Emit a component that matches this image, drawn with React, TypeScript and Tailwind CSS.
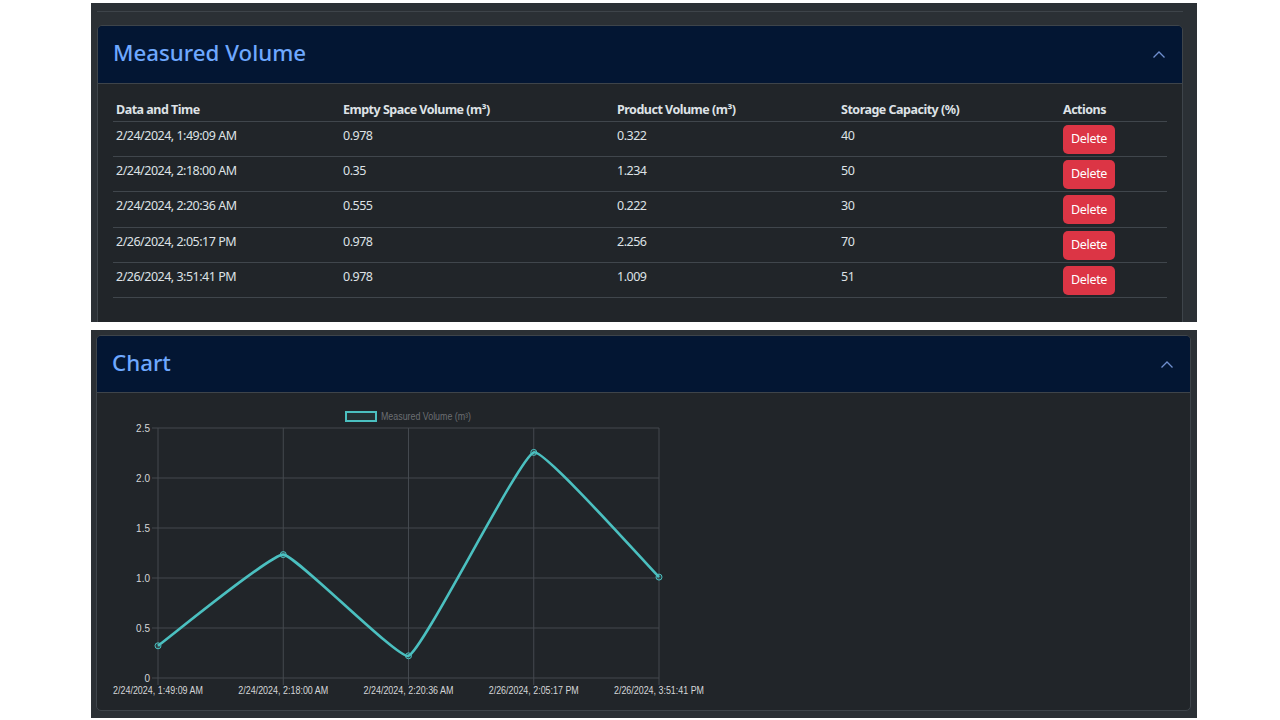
import React from "react";

type Row = {
  date: string;
  empty: string;
  product: string;
  capacity: string;
};

const rows: Row[] = [
  { date: "2/24/2024, 1:49:09 AM", empty: "0.978", product: "0.322", capacity: "40" },
  { date: "2/24/2024, 2:18:00 AM", empty: "0.35", product: "1.234", capacity: "50" },
  { date: "2/24/2024, 2:20:36 AM", empty: "0.555", product: "0.222", capacity: "30" },
  { date: "2/26/2024, 2:05:17 PM", empty: "0.978", product: "2.256", capacity: "70" },
  { date: "2/26/2024, 3:51:41 PM", empty: "0.978", product: "1.009", capacity: "51" },
];

const font = { fontFamily: '"Noto Sans", "Open Sans", Arial, sans-serif' };

const Chevron = () => (
  <svg width="14" height="9" viewBox="0 0 14 9" fill="none">
    <path d="M1.5 7.5 L7 2 L12.5 7.5" stroke="#6f8fcf" strokeWidth="1.3" />
  </svg>
);

type Pt = { x: number; y: number };

// same spline maths chart.js uses for "tension"
const buildPath = (pts: Pt[], t: number) => {
  const cps = pts.map((cur, i) => {
    const prev = pts[i - 1] ?? cur;
    const next = pts[i + 1] ?? cur;
    const d01 = Math.hypot(cur.x - prev.x, cur.y - prev.y);
    const d12 = Math.hypot(next.x - cur.x, next.y - cur.y);
    let s01 = d01 / (d01 + d12);
    let s12 = d12 / (d01 + d12);
    if (isNaN(s01)) s01 = 0;
    if (isNaN(s12)) s12 = 0;
    const fa = t * s01;
    const fb = t * s12;
    return {
      prev: { x: cur.x - fa * (next.x - prev.x), y: cur.y - fa * (next.y - prev.y) },
      next: { x: cur.x + fb * (next.x - prev.x), y: cur.y + fb * (next.y - prev.y) },
    };
  });
  let d = `M ${pts[0].x} ${pts[0].y}`;
  for (let i = 0; i < pts.length - 1; i++) {
    const a = cps[i].next;
    const b = cps[i + 1].prev;
    d += ` C ${a.x} ${a.y} ${b.x} ${b.y} ${pts[i + 1].x} ${pts[i + 1].y}`;
  }
  return d;
};

const VolumeChart = () => {
  const xs = [158, 283.25, 408.5, 533.75, 659];
  const vals = rows.map((r) => parseFloat(r.product));
  const pts = vals.map((v, i) => ({ x: xs[i], y: 678 - v * 100 }));
  const yTicks = ["0", "0.5", "1.0", "1.5", "2.0", "2.5"];
  const grid = "#44494f";

  return (
    <svg
      width="620"
      height="300"
      viewBox="100 400 620 300"
      style={{ fontFamily: '"Liberation Sans", Arial, sans-serif' }}
    >
      {/* legend */}
      <rect x="346" y="412" width="30" height="9" fill="rgba(75,192,192,0.08)" stroke="#4bc0c0" strokeWidth="2" />
      <text x="381" y="419.5" fontSize="10" fill="#6b6e72" textLength="90" lengthAdjust="spacingAndGlyphs">
        Measured Volume (m³)
      </text>

      {/* horizontal grid + y labels */}
      {yTicks.map((lbl, i) => {
        const y = 678 - i * 50;
        return (
          <g key={lbl}>
            <line x1="152" x2="659" y1={y} y2={y} stroke={grid} strokeWidth="1" />
            <text x="150" y={y + 3.5} fontSize="10" fill="#d4d6d8" textAnchor="end">
              {lbl}
            </text>
          </g>
        );
      })}

      {/* vertical grid + x labels */}
      {xs.map((x, i) => (
        <g key={x}>
          <line x1={x} x2={x} y1="428" y2="685" stroke={grid} strokeWidth="1" />
          <text
            x={x - 45}
            y="694"
            fontSize="10.5"
            fill="#d4d6d8"
            textLength="90"
            lengthAdjust="spacingAndGlyphs"
          >
            {rows[i].date}
          </text>
        </g>
      ))}

      <path d={buildPath(pts, 0.1)} fill="none" stroke="#4bc0c0" strokeWidth="2.6" strokeLinejoin="round" />
      {pts.map((p) => (
        <circle key={p.x} cx={p.x} cy={p.y} r="3" fill="rgba(75,192,192,0.15)" stroke="#4bc0c0" strokeWidth="1" />
      ))}
    </svg>
  );
};

const App = () => {
  return (
    <div className="w-[1280px] h-[720px] bg-white pt-[3px] overflow-hidden" style={font}>
      {/* measured volume panel */}
      <section className="ml-[91px] w-[1106px] h-[319px] bg-[#2b3035] overflow-hidden pl-[6px] pt-[8px]">
        <div className="w-[1086px] border-t border-[#3e444a]" />
        <div className="mt-[13px] w-[1086px] h-[400px] border border-[#3e444a] rounded-[5px] overflow-hidden bg-[#212529]">
          <div className="h-[58px] bg-[#031633] border-b border-[#3e444a] flex items-center justify-between pl-[15px] pr-[16px]">
            <h2 className="text-[22.3px] font-medium text-[#6ea8fe] leading-none pb-[3px]">Measured Volume</h2>
            <Chevron />
          </div>
          <div className="pl-[15px] pt-[10px]">
            <div className="w-[1054px] text-[12.5px] tracking-[-0.5px] text-[#dee2e6]">
              <div className="grid grid-cols-[227px_274px_224px_222px_107px] h-[28px] border-b border-[#40464c] font-bold pt-[6px] leading-[19px]">
                <div className="pl-[3px]">Data and Time</div>
                <div className="pl-[3px]">Empty Space Volume (m³)</div>
                <div className="pl-[3px]">Product Volume (m³)</div>
                <div className="pl-[3px]">Storage Capacity (%)</div>
                <div className="pl-[3px]">Actions</div>
              </div>
              {rows.map((r) => (
                <div
                  key={r.date}
                  className="grid grid-cols-[227px_274px_224px_222px_107px] h-[35.2px] border-b border-[#40464c] leading-[19px] pt-[3px]"
                >
                  <div className="pl-[3px] pt-[1px]">{r.date}</div>
                  <div className="pl-[3px] pt-[1px]">{r.empty}</div>
                  <div className="pl-[3px] pt-[1px]">{r.product}</div>
                  <div className="pl-[3px] pt-[1px]">{r.capacity}</div>
                  <div className="pl-[3px]">
                    <button className="w-[52px] h-[29px] rounded-[5px] bg-[#dc3545] text-white text-[12.5px] tracking-[-0.3px] leading-none">
                      Delete
                    </button>
                  </div>
                </div>
              ))}
            </div>
          </div>
        </div>
      </section>

      {/* chart panel */}
      <section className="mt-[8px] ml-[91px] w-[1106px] h-[388px] bg-[#2b3035] overflow-hidden pl-[5px] pt-[5px]">
        <div className="w-[1095px] h-[376px] border border-[#3e444a] rounded-[5px] overflow-hidden bg-[#212529]">
          <div className="h-[57px] bg-[#031633] border-b border-[#3e444a] flex items-center justify-between pl-[15px] pr-[16px]">
            <h2 className="text-[22.3px] font-medium text-[#6ea8fe] leading-none pb-[1px]">Chart</h2>
            <Chevron />
          </div>
          <div className="pl-[3px] pt-[7px]">
            <VolumeChart />
          </div>
        </div>
      </section>
    </div>
  );
};

export default App;
